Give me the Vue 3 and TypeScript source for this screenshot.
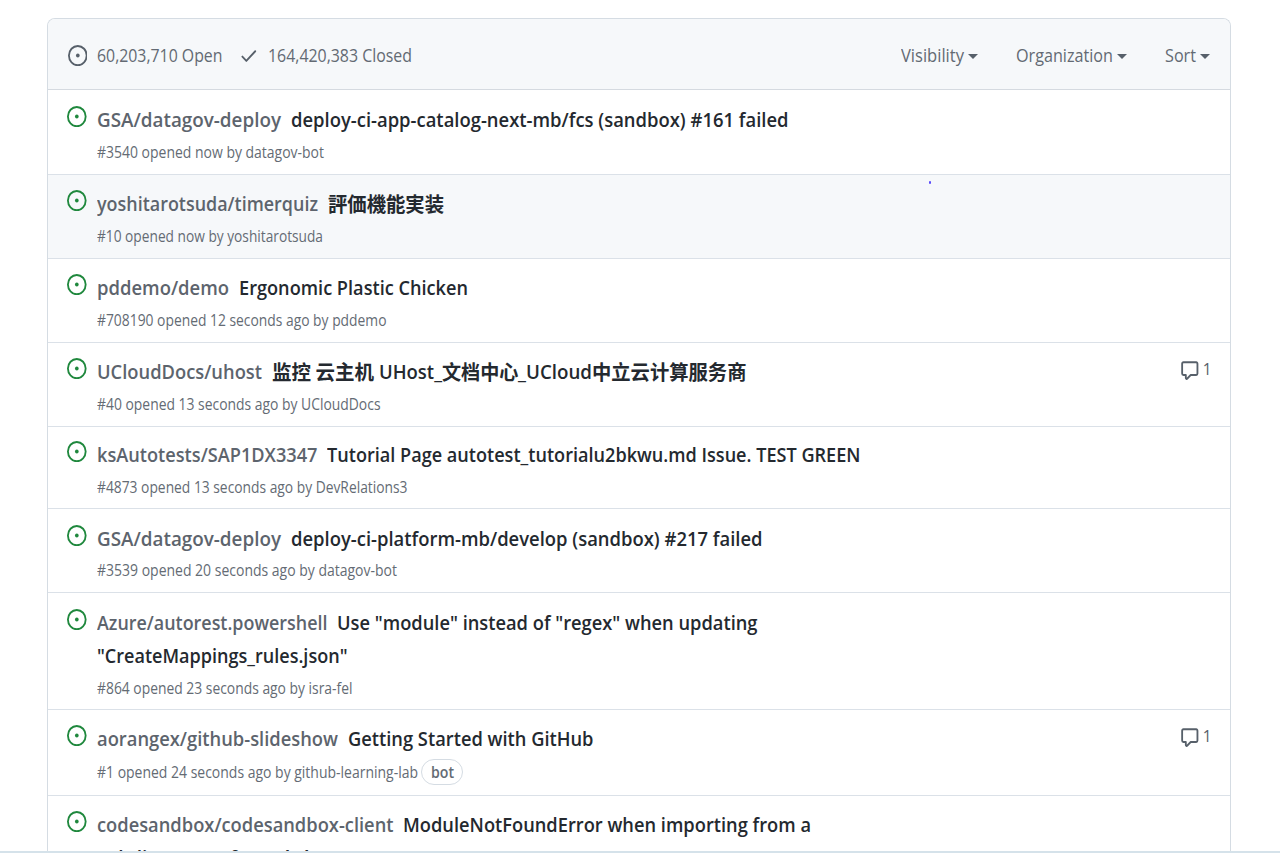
<script setup lang="ts">
import type { Directive } from 'vue'

interface Run {
  text: string
  width: number
  cjk?: 'ja' | 'zh'
  indent?: number
}

interface Issue {
  id: number
  height: number
  top: number
  metaGap: number
  repo: Run
  lines: Run[][]
  meta?: Run
  bot?: boolean
  comments?: number
  highlighted?: boolean
}

// Condenses a text run horizontally so that it takes the given width.
const vFit: Directive<HTMLElement, number> = {
  mounted(el, { value }) {
    const natural = el.getBoundingClientRect().width
    el.style.transform = `scaleX(${value / natural})`
    el.style.marginRight = `${value - natural}px`
  },
}

const filters: Run[] = [
  { text: 'Visibility', width: 63 },
  { text: 'Organization', width: 97 },
  { text: 'Sort', width: 31 },
]

const issues: Issue[] = [
  {
    id: 3540, height: 85, top: 1, metaGap: 0,
    repo: { text: 'GSA/datagov-deploy', width: 184 },
    lines: [[{ text: 'deploy-ci-app-catalog-next-mb/fcs (sandbox) #161 failed', width: 497.5 }]],
    meta: { text: '#3540 opened now by datagov-bot', width: 227 },
  },
  {
    id: 10, height: 84, top: 0, metaGap: 0, highlighted: true,
    repo: { text: 'yoshitarotsuda/timerquiz', width: 221 },
    lines: [[{ text: '評価機能実装', width: 116, cjk: 'ja' }]],
    meta: { text: '#10 opened now by yoshitarotsuda', width: 226 },
  },
  {
    id: 708190, height: 84, top: 0, metaGap: 0,
    repo: { text: 'pddemo/demo', width: 132 },
    lines: [[{ text: 'Ergonomic Plastic Chicken', width: 229 }]],
    meta: { text: '#708190 opened 12 seconds ago by pddemo', width: 289.5 },
  },
  {
    id: 40, height: 84, top: 0, metaGap: 0, comments: 1,
    repo: { text: 'UCloudDocs/uhost', width: 165 },
    lines: [[
      { text: '监控 云主机', width: 102, cjk: 'zh' },
      { text: 'UHost_', width: 63, indent: 5 },
      { text: '文档中心', width: 76.5, cjk: 'zh' },
      { text: '_UCloud', width: 74 },
      { text: '中立云计算服务商', width: 154.5, cjk: 'zh' },
    ]],
    meta: { text: '#40 opened 13 seconds ago by UCloudDocs', width: 283.5 },
  },
  {
    id: 4873, height: 82, top: -1, metaGap: 0,
    repo: { text: 'ksAutotests/SAP1DX3347', width: 220.5 },
    lines: [[{ text: 'Tutorial Page autotest_tutorialu2bkwu.md Issue. TEST GREEN', width: 533.5 }]],
    meta: { text: '#4873 opened 13 seconds ago by DevRelations3', width: 310.5 },
  },
  {
    id: 3539, height: 84, top: 1, metaGap: -1,
    repo: { text: 'GSA/datagov-deploy', width: 184 },
    lines: [[{ text: 'deploy-ci-platform-mb/develop (sandbox) #217 failed', width: 471.5 }]],
    meta: { text: '#3539 opened 20 seconds ago by datagov-bot', width: 300 },
  },
  {
    id: 864, height: 117, top: 1, metaGap: 0,
    repo: { text: 'Azure/autorest.powershell', width: 230.5 },
    lines: [
      [{ text: 'Use "module" instead of "regex" when updating', width: 420.5 }],
      [{ text: '"CreateMappings_rules.json"', width: 250.5 }],
    ],
    meta: { text: '#864 opened 23 seconds ago by isra-fel', width: 255.5 },
  },
  {
    id: 1, height: 86, top: 0, metaGap: 1, bot: true, comments: 1,
    repo: { text: 'aorangex/github-slideshow', width: 241 },
    lines: [[{ text: 'Getting Started with GitHub', width: 245.5 }]],
    meta: { text: '#1 opened 24 seconds ago by github-learning-lab', width: 321 },
  },
  {
    id: 2, height: 117, top: 0, metaGap: 0,
    repo: { text: 'codesandbox/codesandbox-client', width: 296.5 },
    lines: [
      [{ text: 'ModuleNotFoundError when importing from a', width: 408 }],
      [{ text: 'subdirectory of', width: 140 }, { text: 'module', width: 78, indent: 7 }],
    ],
  },
]
</script>

<template>
  <div class="page">
    <main class="box">
      <header class="head">
        <svg class="icon total" viewBox="0 0 16 16" preserveAspectRatio="none">
          <path d="M8 9.5a1.5 1.5 0 100-3 1.5 1.5 0 000 3z" />
          <path fill-rule="evenodd" d="M8 0a8 8 0 100 16A8 8 0 008 0zM1.5 8a6.5 6.5 0 1113 0 6.5 6.5 0 01-13 0z" />
        </svg>
        <span v-fit="125.5" class="fit count">60,203,710 Open</span>
        <svg class="icon check" viewBox="0 0 16 16" preserveAspectRatio="none">
          <path fill-rule="evenodd" d="M13.78 4.22a.75.75 0 010 1.06l-7.25 7.25a.75.75 0 01-1.06 0L2.22 9.28a.75.75 0 011.06-1.06L6 10.94l6.72-6.72a.75.75 0 011.06 0z" />
        </svg>
        <span v-fit="144" class="fit count closed">164,420,383 Closed</span>
        <nav class="filters">
          <span v-for="f in filters" :key="f.text" class="filter">
            <span v-fit="f.width" class="fit">{{ f.text }}</span>
            <i class="caret"></i>
          </span>
        </nav>
      </header>

      <article
        v-for="issue in issues"
        :key="issue.id"
        class="row"
        :class="{ highlighted: issue.highlighted }"
        :style="{ height: issue.height + 'px' }"
      >
        <div class="content" :style="{ marginTop: issue.top + 'px' }">
          <svg class="icon open" viewBox="0 0 16 16" preserveAspectRatio="none">
            <path d="M8 9.5a1.5 1.5 0 100-3 1.5 1.5 0 000 3z" />
            <path fill-rule="evenodd" d="M8 0a8 8 0 100 16A8 8 0 008 0zM1.5 8a6.5 6.5 0 1113 0 6.5 6.5 0 01-13 0z" />
          </svg>
          <div class="body">
            <div v-for="(line, n) in issue.lines" :key="n" class="line">
              <span v-if="n === 0" class="repo"><span v-fit="issue.repo.width" class="fit">{{ issue.repo.text }}</span></span>
              <span
                v-for="run in line"
                :key="run.text"
                class="run"
                :class="run.cjk"
                :style="{ paddingLeft: (run.indent ?? 0) + 'px' }"
              ><span v-fit="run.width" class="fit">{{ run.text }}</span></span>
            </div>
            <div v-if="issue.meta" class="meta" :style="{ marginTop: issue.metaGap + 'px' }">
              <span v-fit="issue.meta.width" class="fit">{{ issue.meta.text }}</span>
              <span v-if="issue.bot" class="bot"><span v-fit="23" class="fit">bot</span></span>
            </div>
          </div>
          <div v-if="issue.comments" class="comments">
            <svg class="icon" viewBox="0 0 16 16" preserveAspectRatio="none">
              <path fill-rule="evenodd" d="M2.75 2.5a.25.25 0 00-.25.25v7.5c0 .138.112.25.25.25h2a.75.75 0 01.75.75v2.19l2.72-2.72a.75.75 0 01.53-.22h4.5a.25.25 0 00.25-.25v-7.5a.25.25 0 00-.25-.25H2.75zM1 2.75C1 1.784 1.784 1 2.75 1h10.5c.966 0 1.75.784 1.75 1.75v7.5A1.75 1.75 0 0113.25 12H9.06l-2.573 2.573A1.457 1.457 0 014 13.543V12H2.75A1.75 1.75 0 011 10.25v-7.5z" />
            </svg>
            <span class="number">{{ issue.comments }}</span>
          </div>
        </div>
        <i v-if="issue.highlighted" class="speck"></i>
      </article>
    </main>
    <footer class="edge"></footer>
  </div>
</template>

<style>
body {
  margin: 0;
  background: #fff;
}
</style>

<style scoped>
.page {
  box-sizing: border-box;
  display: flex;
  flex-direction: column;
  height: 853px;
  padding-top: 18px;
  overflow: hidden;
  background: #fff;
  color: #24292f;
  font-family: "Open Sans", "Noto Sans", "Noto Sans CJK SC", sans-serif;
}
.box {
  box-sizing: border-box;
  flex: 1;
  min-height: 0;
  width: 1184px;
  margin-left: 47px;
  overflow: hidden;
  border: 1px solid #d5dce3;
  border-bottom: 0;
  border-radius: 8px 8px 0 0;
}
.edge {
  flex: none;
  height: 2px;
  background: #d5e2ea;
}
.fit {
  display: inline-block;
  transform-origin: 0 50%;
  white-space: nowrap;
}
.icon {
  flex: none;
  display: block;
  width: 19.6px;
  height: 21.2px;
  fill: #57606a;
}
.head {
  box-sizing: border-box;
  display: flex;
  align-items: center;
  height: 71px;
  padding: 0 20px 0 19.6px;
  border-bottom: 1px solid #d5dae0;
  background: #f6f8fa;
  color: #636a73;
  font-size: 18.8px;
}
.total {
  margin-top: 3px;
}
.count {
  margin: 1px 0 0 9.8px;
}
.closed {
  margin-left: 9.3px;
}
.check {
  margin: 3px 0 0 17px;
}
.filters {
  display: flex;
  gap: 38px;
  margin: 1px 0 0 auto;
}
.filter {
  display: flex;
  align-items: center;
}
.caret {
  margin: 4px 0 0 4px;
  border: 5px solid transparent;
  border-top: 5.5px solid #57606a;
  border-bottom: 0;
}
.row {
  position: relative;
  box-sizing: border-box;
  display: flow-root;
  border-bottom: 1px solid #dbe1e8;
}
.content {
  display: flex;
  padding-left: 19.4px;
}
.highlighted {
  background: #f6f8fa;
}
.open {
  margin-top: 14.5px;
  fill: #1f883d;
}
.body {
  padding: 12px 0 0 10px;
}
.line {
  display: flex;
  height: 33px;
  font-size: 20.4px;
  font-weight: 550;
  line-height: 33px;
}
.line + .line {
  height: 33px;
  line-height: 32px;
}
.repo {
  margin-right: 10px;
  color: #5d646d;
}
.repo,
.run {
  flex: none;
}
.ja {
  font-family: "Noto Sans CJK JP", sans-serif;
  font-weight: 700;
}
.zh {
  font-family: "Noto Sans CJK SC", sans-serif;
  font-weight: 700;
}
.meta {
  display: flex;
  align-items: center;
  height: 32px;
  color: #646b74;
  font-size: 15.7px;
  line-height: 32px;
}
.bot {
  box-sizing: border-box;
  height: 26px;
  width: 42px;
  margin-left: 3.5px;
  padding-left: 9px;
  border: 1px solid #d5dce3;
  border-radius: 13px;
  font-weight: 600;
  line-height: 24px;
}
.comments {
  display: flex;
  height: 21px;
  margin: 16.5px 18.5px 0 auto;
  color: #57606a;
}
.number {
  margin-left: 3px;
  font-size: 15.4px;
  line-height: 20px;
}
.speck {
  position: absolute;
  left: 880.5px;
  top: 6px;
  width: 2.5px;
  height: 2.5px;
  border-radius: 1px;
  background: #5a4cfa;
}
</style>
